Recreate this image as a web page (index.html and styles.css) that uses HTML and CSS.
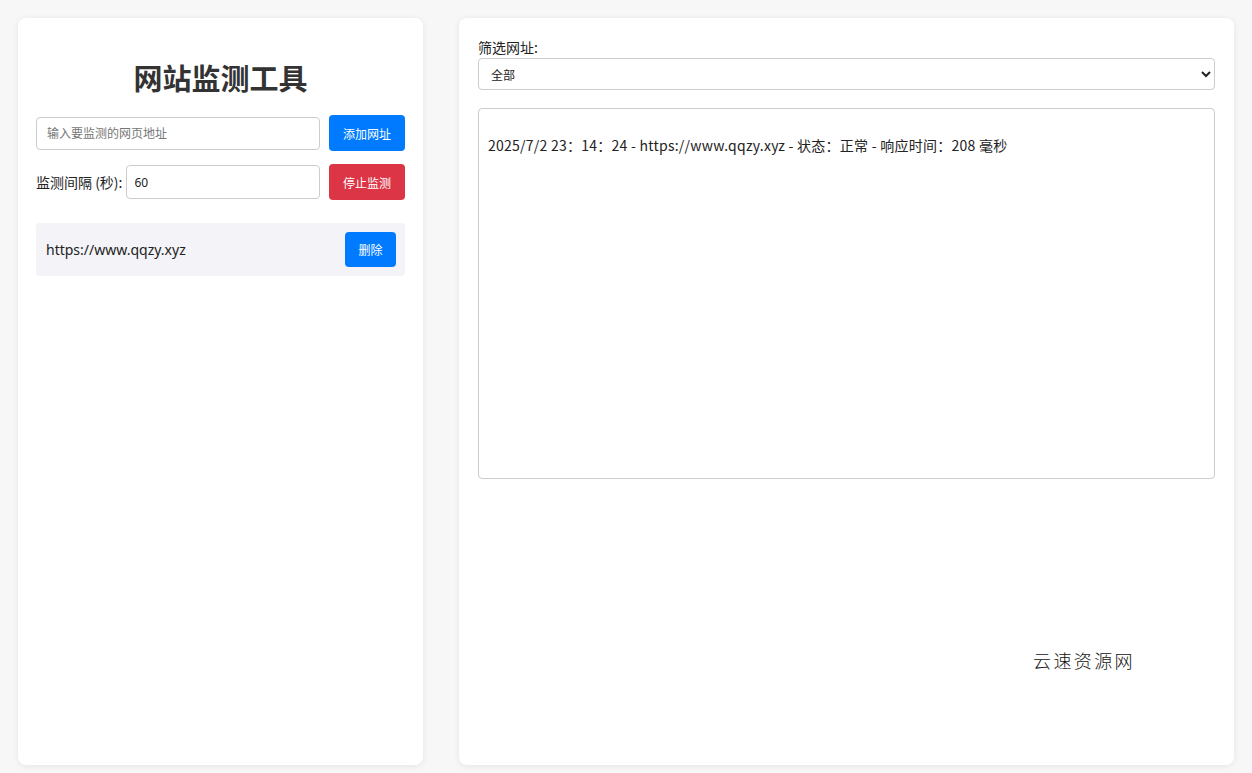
FILE: index.html
```html
<!DOCTYPE html>
<html lang="zh-CN">
<head>
<meta charset="utf-8">
<title>网站监测工具</title>
<link rel="stylesheet" href="styles.css">
</head>
<body>
<div class="page">
  <section class="card left">
    <h1 class="title">网站监测工具</h1>
    <div class="row">
      <input class="field" type="text" placeholder="输入要监测的网页地址">
      <button class="btn btn-blue">添加网址</button>
    </div>
    <div class="row row-interval">
      <label class="label">监测间隔 (秒):</label>
      <input class="field field-interval" type="text" value="60">
      <button class="btn btn-red">停止监测</button>
    </div>
    <ul class="url-list">
      <li class="url-item">
        <span class="url-text">https://www.qqzy.xyz</span>
        <button class="btn btn-blue btn-small">删除</button>
      </li>
    </ul>
  </section>
  <section class="card right">
    <label class="filter-label">筛选网址:</label>
    <select class="filter-select">
      <option>全部</option>
    </select>
    <div class="log">
      <p class="log-line">2025/7/2 23：14：24 - https://www.qqzy.xyz - 状态：正常 - 响应时间：208 毫秒</p>
    </div>
    <div class="watermark">云速资源网</div>
  </section>
</div>
</body>
</html>
```

FILE: styles.css
```css
* { box-sizing: border-box; }
html, body { margin: 0; padding: 0; }
body {
  background: #f7f7f7;
  font-family: "Noto Sans", "Noto Sans CJK SC", sans-serif;
  color: #222;
}
.page {
  display: flex;
  gap: 36px;
  padding: 18px 18px 8px 18px;
  height: 773px;
}
.card {
  background: #fff;
  border-radius: 8px;
  box-shadow: 0 1px 6px rgba(0,0,0,0.08);
}
.left {
  width: 405px;
  padding: 18px 18px;
}
.right {
  flex: 1;
  padding: 20px 19px;
  position: relative;
  display: flex;
  flex-direction: column;
}
.title {
  margin: 23px 0 20px;
  text-align: center;
  font-size: 29px;
  line-height: 36px;
  font-weight: 700;
  color: #333;
  font-family: "Noto Sans CJK SC", sans-serif;
}
.row {
  display: flex;
  align-items: center;
  gap: 9px;
  margin-bottom: 13px;
}
.field {
  flex: 1;
  height: 33px;
  border: 1px solid #ccc;
  border-radius: 4px;
  padding: 0 10px;
  font-size: 12px;
  font-family: "Noto Sans", "Noto Sans CJK SC", sans-serif;
  color: #222;
  outline: none;
}
.field::placeholder { color: #777; }
.row-interval { gap: 0; }
.row-interval .btn { margin-left: 9px; }
.field-interval { padding: 0 8px; height: 34px; }
.label {
  font-size: 14px;
  color: #222;
  font-family: "Noto Sans CJK SC", sans-serif;
  white-space: nowrap;
  margin-right: 3px;
}
.btn {
  width: 76px;
  height: 36px;
  border: none;
  border-radius: 4px;
  color: #fff;
  font-size: 12px;
  font-family: "Noto Sans CJK SC", sans-serif;
  cursor: pointer;
}
.btn-blue { background: #007bff; }
.btn-red { background: #dc3545; }
.url-list {
  list-style: none;
  margin: 23px 0 0;
  padding: 0;
}
.url-item {
  display: flex;
  align-items: center;
  justify-content: space-between;
  background: #f4f4f8;
  border-radius: 4px;
  height: 53px;
  padding: 0 9px 0 10px;
}
.url-text {
  font-size: 14px;
  color: #222;
}
.btn-small { width: 51px; height: 35px; }
.filter-label {
  font-size: 14px;
  line-height: 18px;
  font-family: "Noto Sans CJK SC", sans-serif;
  color: #222;
}
.filter-select {
  margin-top: 2px;
  height: 32px;
  border: 1px solid #ccc;
  border-radius: 4px;
  background: #fff;
  font-size: 12px;
  padding: 0 8px;
  font-family: "Noto Sans CJK SC", sans-serif;
  color: #222;
}
.log {
  margin-top: 18px;
  height: 371px;
  border: 1px solid #ccc;
  border-radius: 4px;
  padding: 26px 9px;
}
.log-line {
  margin: 0;
  font-size: 14px;
  line-height: 20px;
  letter-spacing: 0.25px;
  color: #222;
  font-family: "Noto Sans CJK SC", sans-serif;
}
.watermark {
  position: absolute;
  left: 574px;
  top: 629px;
  font-size: 18px;
  letter-spacing: 2.4px;
  color: #111;
  font-weight: 300;
  font-family: "Noto Sans CJK SC", sans-serif;
}
```
